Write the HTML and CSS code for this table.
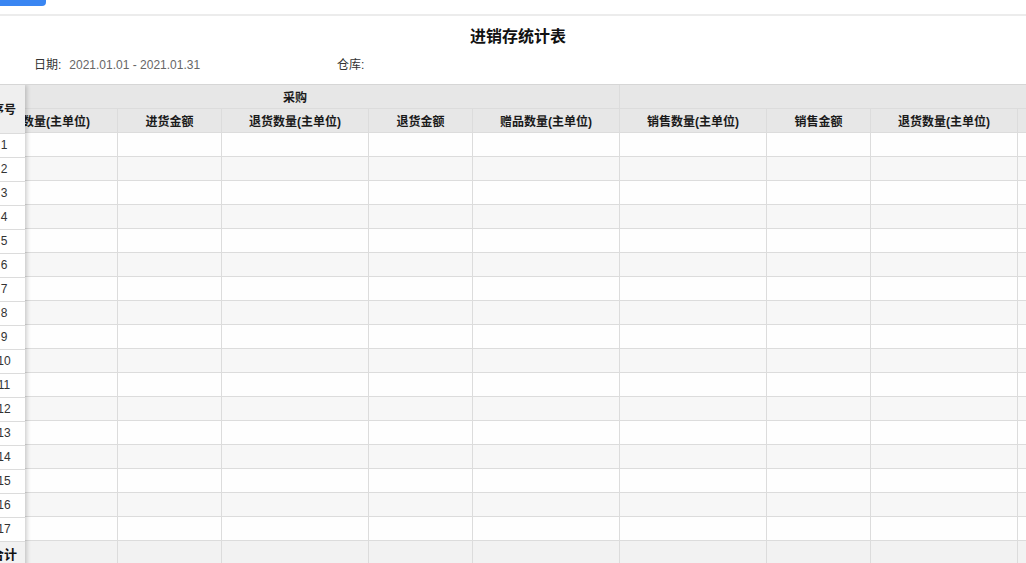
FILE: index.html
```html
<!DOCTYPE html>
<html lang="zh-CN">
<head>
<meta charset="utf-8">
<title>进销存统计表</title>
<link rel="stylesheet" href="styles.css">
</head>
<body>
<div class="topbar"><span class="tab-btn"></span></div>
<div class="report">
  <h1 class="title">进销存统计表</h1>
  <div class="meta">
    <div class="meta-item meta-date"><span class="label">日期:</span><span class="value">2021.01.01 - 2021.01.31</span></div>
    <div class="meta-item"><span class="label">仓库:</span><span class="value"></span></div>
  </div>
  <div class="grid">
    <div class="fixed">
      <table class="tbl fixed-tbl">
        <thead>
          <tr><th class="h2x">序号</th></tr>
        </thead>
        <tbody>
          <tr><td>1</td></tr><tr><td>2</td></tr><tr><td>3</td></tr><tr><td>4</td></tr>
          <tr><td>5</td></tr><tr><td>6</td></tr><tr><td>7</td></tr><tr><td>8</td></tr>
          <tr><td>9</td></tr><tr><td>10</td></tr><tr><td>11</td></tr><tr><td>12</td></tr>
          <tr><td>13</td></tr><tr><td>14</td></tr><tr><td>15</td></tr><tr><td>16</td></tr>
          <tr><td>17</td></tr>
        </tbody>
        <tfoot><tr><td>合计</td></tr></tfoot>
      </table>
    </div>
    <div class="scroll">
      <table class="tbl main-tbl">
        <colgroup>
          <col class="w-l"><col class="w-s"><col class="w-l"><col class="w-s"><col class="w-l">
          <col class="w-l"><col class="w-s"><col class="w-l"><col class="w-s"><col class="w-l"><col class="w-s"><col class="w-l">
        </colgroup>
        <thead>
          <tr class="grp"><th colspan="5">采购</th><th colspan="7">销售</th></tr>
          <tr class="sub">
            <th>进货数量(主单位)</th><th>进货金额</th><th>退货数量(主单位)</th><th>退货金额</th><th>赠品数量(主单位)</th>
            <th>销售数量(主单位)</th><th>销售金额</th><th>退货数量(主单位)</th><th>退货金额</th><th>赠品数量(主单位)</th><th>成本金额</th><th>毛利</th>
          </tr>
        </thead>
        <tbody>
          <tr><td></td><td></td><td></td><td></td><td></td><td></td><td></td><td></td><td></td><td></td><td></td><td></td></tr>
          <tr><td></td><td></td><td></td><td></td><td></td><td></td><td></td><td></td><td></td><td></td><td></td><td></td></tr>
          <tr><td></td><td></td><td></td><td></td><td></td><td></td><td></td><td></td><td></td><td></td><td></td><td></td></tr>
          <tr><td></td><td></td><td></td><td></td><td></td><td></td><td></td><td></td><td></td><td></td><td></td><td></td></tr>
          <tr><td></td><td></td><td></td><td></td><td></td><td></td><td></td><td></td><td></td><td></td><td></td><td></td></tr>
          <tr><td></td><td></td><td></td><td></td><td></td><td></td><td></td><td></td><td></td><td></td><td></td><td></td></tr>
          <tr><td></td><td></td><td></td><td></td><td></td><td></td><td></td><td></td><td></td><td></td><td></td><td></td></tr>
          <tr><td></td><td></td><td></td><td></td><td></td><td></td><td></td><td></td><td></td><td></td><td></td><td></td></tr>
          <tr><td></td><td></td><td></td><td></td><td></td><td></td><td></td><td></td><td></td><td></td><td></td><td></td></tr>
          <tr><td></td><td></td><td></td><td></td><td></td><td></td><td></td><td></td><td></td><td></td><td></td><td></td></tr>
          <tr><td></td><td></td><td></td><td></td><td></td><td></td><td></td><td></td><td></td><td></td><td></td><td></td></tr>
          <tr><td></td><td></td><td></td><td></td><td></td><td></td><td></td><td></td><td></td><td></td><td></td><td></td></tr>
          <tr><td></td><td></td><td></td><td></td><td></td><td></td><td></td><td></td><td></td><td></td><td></td><td></td></tr>
          <tr><td></td><td></td><td></td><td></td><td></td><td></td><td></td><td></td><td></td><td></td><td></td><td></td></tr>
          <tr><td></td><td></td><td></td><td></td><td></td><td></td><td></td><td></td><td></td><td></td><td></td><td></td></tr>
          <tr><td></td><td></td><td></td><td></td><td></td><td></td><td></td><td></td><td></td><td></td><td></td><td></td></tr>
          <tr><td></td><td></td><td></td><td></td><td></td><td></td><td></td><td></td><td></td><td></td><td></td><td></td></tr>
        </tbody>
        <tfoot>
          <tr><td></td><td></td><td></td><td></td><td></td><td></td><td></td><td></td><td></td><td></td><td></td><td></td></tr>
        </tfoot>
      </table>
    </div>
  </div>
</div>
</body>
</html>
```

FILE: styles.css
```css
* { box-sizing: border-box; }
html, body { margin: 0; padding: 0; background: #fff; overflow: hidden; }
body {
  font-family: "Liberation Sans", "Noto Sans CJK SC", sans-serif;
  font-size: 12px;
  color: #333;
  width: 1026px;
  height: 563px;
}
.topbar {
  height: 16px;
  background: #fff;
  border-bottom: 2px solid #ececec;
  display: flex;
  align-items: flex-start;
}
.tab-btn {
  display: block;
  width: 46px;
  height: 6px;
  background: #3a86f2;
  border-radius: 0 0 4px 0;
}
.report { display: flex; flex-direction: column; }
.title {
  margin: 10px 0 0;
  height: 22px;
  line-height: 22px;
  text-align: center;
  font-size: 16px;
  font-weight: bold;
  color: #111;
  padding-left: 10px;
}
.meta {
  display: flex;
  height: 36px;
  align-items: center;
  padding-left: 34px;
  padding-bottom: 6px;
}
.meta-item { display: flex; gap: 8px; align-items: baseline; }
.meta-date { width: 303px; }
.label { color: #333; }
.value { color: #666; }
.grid {
  display: flex;
  border-top: 1px solid #d6d6d6;
  height: 500px;
  overflow: hidden;
}
.fixed {
  flex: none;
  width: 42px;
  margin-left: -17px;
  position: relative;
  z-index: 2;
  box-shadow: 2px 0 4px rgba(0,0,0,0.18);
  background: #fff;
}
.scroll {
  flex: 1;
  overflow: hidden;
  position: relative;
  z-index: 1;
}
.tbl {
  border-collapse: collapse;
  table-layout: fixed;
}
.tbl th, .tbl td {
  height: 24px;
  padding: 0;
  text-align: center;
  vertical-align: middle;
  white-space: nowrap;
  overflow: hidden;
  border: 1px solid #dcdcdc;
}
.tbl th {
  font-weight: bold;
  color: #1a1a1a;
  background: #e7e7e7;
}
.tbl tr.grp th { height: 23px; border-top: none; }
.tbl tr.sub th { height: 24px; }
.tbl tbody tr:nth-child(odd) td { background: #fefefe; }
.tbl tbody tr:nth-child(even) td { background: #f7f7f7; }
.tbl tfoot td {
  background: #f2f2f2;
  font-weight: bold;
  color: #111;
  font-size: 13px;
}
.fixed-tbl { width: 42px; }
.fixed-tbl th, .fixed-tbl td { border-left: none; border-right: none; }
.fixed-tbl th.h2x { height: 48px; background: #efefef; border-top: none; }
.fixed-tbl tbody td { background: #fff !important; color: #333; }
.main-tbl {
  margin-left: -55px;
  width: 1540px;
}
.main-tbl .w-l { width: 147px; }
.main-tbl .w-s { width: 104px; }
```
